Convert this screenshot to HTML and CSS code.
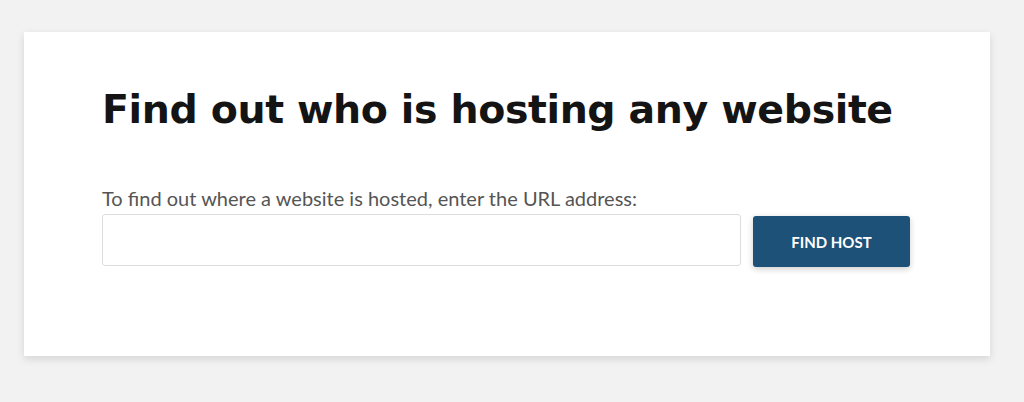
FILE: index.html
```html
<!DOCTYPE html>
<html lang="en">
<head>
<meta charset="utf-8">
<title>Find host</title>
<link rel="stylesheet" href="styles.css">
</head>
<body>
<main class="card">
  <h1 class="title">Find out who is hosting any website</h1>
  <form class="finder" onsubmit="return false">
    <label class="label" for="url">To find out where a website is hosted, enter the URL address:</label>
    <div class="row">
      <input class="url" id="url" type="text">
      <button class="btn" type="submit">FIND HOST</button>
    </div>
  </form>
</main>
</body>
</html>
```

FILE: styles.css
```css
html, body {
  margin: 0;
  padding: 0;
}
body {
  background: #f2f2f2;
  padding: 32px 34px 46px 24px;
  font-family: "Lato", "Open Sans", sans-serif;
}
.card {
  background: #fff;
  height: 324px;
  box-sizing: border-box;
  padding: 54px 78px 0 78px;
  box-shadow: 0 3px 8px rgba(0, 0, 0, 0.12);
}
.title {
  margin: 0;
  font-family: "DejaVu Sans", sans-serif;
  font-weight: 700;
  font-size: 39.5px;
  line-height: 46px;
  color: #141414;
  letter-spacing: -0.4px;
}
.finder {
  margin-top: 54px;
}
.label {
  display: block;
  font-size: 20px;
  line-height: 24px;
  color: #555;
}
.row {
  display: flex;
  align-items: flex-start;
  gap: 12px;
  margin-top: 4px;
}
.url {
  width: 639px;
  height: 52px;
  box-sizing: border-box;
  border: 1px solid #ddd;
  border-radius: 3px;
  margin: 0;
}
.btn {
  width: 157px;
  height: 51px;
  margin-top: 2px;
  background: #1d5177;
  color: #fff;
  border: 0;
  border-radius: 3px;
  font-family: "Lato", sans-serif;
  font-weight: 700;
  font-size: 15px;
  box-shadow: 0 2px 6px rgba(0, 0, 0, 0.2);
}
```
